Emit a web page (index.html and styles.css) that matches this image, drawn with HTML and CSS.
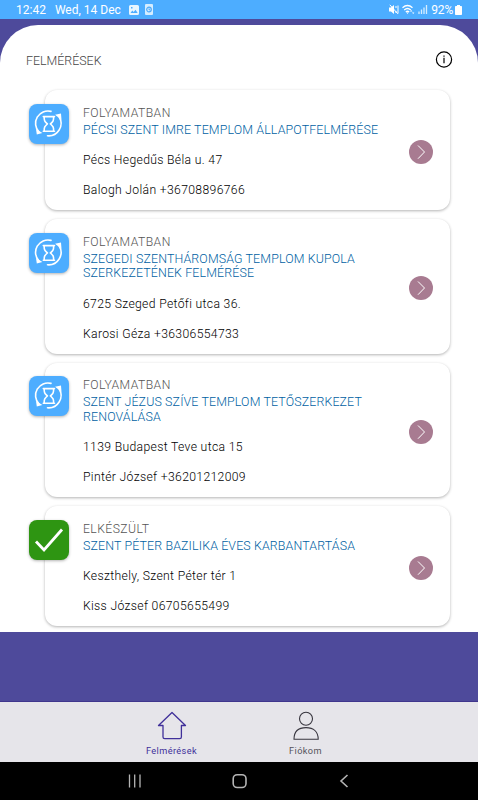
FILE: index.html
```html
<!DOCTYPE html>
<html lang="hu">
<head>
  <meta charset="UTF-8">
  <meta name="viewport" content="width=device-width, initial-scale=1.0">
  <title>Felmérések</title>
  <link rel="stylesheet" href="styles.css">
</head>
<body>
  <svg class="icon-defs" width="0" height="0">
    <symbol id="icon-progress" viewBox="0 0 40 40">
      <g fill="none" stroke="white" stroke-width="1.6" stroke-linecap="round" stroke-linejoin="round">
        <path d="M22 7.4A12.400 12.400 0 0 0 10 28"/>
        <path d="M30.200 13A12.400 12.400 0 0 1 18.500 31.800"/>
        <path d="M14.300 12.600h11.200M14.300 27.200h11.200M15.200 12.800c-.2 4.300.8 4.800 3.200 7.100-2.400 2.300-3.400 3-3.200 7.100M24.600 12.800c.2 4.300-.8 4.800-3.200 7.100 2.400 2.300 3.400 3 3.200 7.100"/>
      </g>
      <path d="M26 10.800l6-1.300.5 6.200zM7 25l.8 5.400 5.600-1.400z" fill="white"/>
    </symbol>
    <symbol id="icon-check" viewBox="0 0 40 40">
      <path d="M7 21.500l8 8.500L33 9.500" fill="none" stroke="white" stroke-width="2.8"/>
    </symbol>
    <symbol id="icon-arrow" viewBox="0 0 24 24">
      <path d="M9 5.500l6.500 6.500L9 18.700" fill="none" stroke="white" stroke-width="1"/>
    </symbol>
  </svg>

  <header class="status-bar">
    <span class="time">12:42</span>
    <span class="date">Wed, 14 Dec</span>
    <svg class="status-picture" width="10" height="10" viewBox="0 0 10 10">
      <path fill="#e8f6ff" fill-rule="evenodd" d="M1.500 0h7Q10 0 10 1.500v7Q10 10 8.500 10h-7Q0 10 0 8.500v-7Q0 0 1.500 0zM1.500 8h7.200L6.500 4.800 4.700 7 3.300 5.600zM2 2v1.500h1.500V2z"/>
    </svg>
    <svg class="status-app" width="8" height="11" viewBox="0 0 8 11">
      <rect width="8" height="11" rx="1" fill="#d5edff"/>
      <circle cx="4" cy="5.500" r="2.300" fill="none" stroke="#4da9f9" stroke-width="1.200"/>
      <path d="M4 4.300v1.500h1.200" fill="none" stroke="#4da9f9"/>
    </svg>
    <div class="status-right">
      <svg width="10" height="11" viewBox="0 0 10 11">
        <path d="M0 3.500h2L5 1v9L2 7.500H0z" fill="white"/>
        <path d="M.8.800l8 9M7 2v2M7 7v2M9 1.500v8" stroke="white" fill="none"/>
      </svg>
      <svg width="13" height="11" viewBox="0 0 13 11">
        <g fill="none" stroke="white" stroke-width="1.300">
          <path d="M.5 3.700q5-4.300 10 0M2.200 5.900q3.300-2.800 6.600 0M3.800 7.900q1.700-1.300 3.400 0"/>
        </g>
        <path d="M4.400 8.500h2.200l-1.100 1.500zM8 7.500l1.200-1.500 1.200 1.500zM10 8.500h2.400l-1.200 1.500z" fill="white"/>
      </svg>
      <svg width="10" height="11" viewBox="0 0 10 11">
        <path d="M1 10V7.500M3.500 10V5.500M6 10V3.500M8.500 10V1" stroke="#d5edff" stroke-width="1.300"/>
      </svg>
      <span class="battery-text">92%</span>
      <svg width="7" height="10" viewBox="0 0 7 10">
        <path d="M2 0h3v1h1.200q.8 0 .8.800v7.400q0 .8-.8.800H.800q-.8 0-.8-.8V1.800Q0 1 .800 1H2z" fill="white"/>
      </svg>
    </div>
  </header>

  <main class="sheet">
    <div class="sheet-header">
      <h1>FELMÉRÉSEK</h1>
      <svg width="18" height="18" viewBox="0 0 18 18">
        <circle cx="9" cy="8.500" r="7.600" fill="none" stroke="black" stroke-width="1.200"/>
        <path d="M9 6.800v5.500M9 4.500v1.300" stroke="black" stroke-width="1.200"/>
      </svg>
    </div>

    <div class="survey-list">
      <article class="card">
        <div class="badge"><svg><use href="#icon-progress"/></svg></div>
        <div class="card-text">
          <p class="state">FOLYAMATBAN</p>
          <h2>PÉCSI SZENT IMRE TEMPLOM ÁLLAPOTFELMÉRÉSE</h2>
          <p class="address">Pécs Hegedűs Béla u. 47</p>
          <p class="contact">Balogh Jolán +36708896766</p>
        </div>
        <div class="arrow"><svg><use href="#icon-arrow"/></svg></div>
      </article>

      <article class="card">
        <div class="badge"><svg><use href="#icon-progress"/></svg></div>
        <div class="card-text">
          <p class="state">FOLYAMATBAN</p>
          <h2>SZEGEDI SZENTHÁROMSÁG TEMPLOM KUPOLA<br>SZERKEZETÉNEK FELMÉRÉSE</h2>
          <p class="address">6725 Szeged Petőfi utca 36.</p>
          <p class="contact">Karosi Géza +36306554733</p>
        </div>
        <div class="arrow"><svg><use href="#icon-arrow"/></svg></div>
      </article>

      <article class="card">
        <div class="badge"><svg><use href="#icon-progress"/></svg></div>
        <div class="card-text">
          <p class="state">FOLYAMATBAN</p>
          <h2>SZENT JÉZUS SZÍVE TEMPLOM TETŐSZERKEZET<br>RENOVÁLÁSA</h2>
          <p class="address">1139 Budapest Teve utca 15</p>
          <p class="contact">Pintér József +36201212009</p>
        </div>
        <div class="arrow"><svg><use href="#icon-arrow"/></svg></div>
      </article>

      <article class="card">
        <div class="badge done"><svg><use href="#icon-check"/></svg></div>
        <div class="card-text">
          <p class="state">ELKÉSZÜLT</p>
          <h2>SZENT PÉTER BAZILIKA ÉVES KARBANTARTÁSA</h2>
          <p class="address">Keszthely, Szent Péter tér 1</p>
          <p class="contact">Kiss József 06705655499</p>
        </div>
        <div class="arrow"><svg><use href="#icon-arrow"/></svg></div>
      </article>
    </div>
  </main>

  <nav class="tab-bar">
    <a class="tab active">
      <svg width="30" height="30" viewBox="0 0 30 30">
        <path d="M15 1.500L1.500 14.500H6V26q0 1.700 1.700 1.700h15Q24.400 27.700 24.400 26V14.500h4.100z" fill="none" stroke="currentColor" stroke-width="1.300" stroke-linejoin="round"/>
      </svg>
      <span>Felmérések</span>
    </a>
    <a class="tab">
      <svg width="30" height="30" viewBox="0 0 30 30">
        <g fill="none" stroke="#38363f" stroke-width="1.100">
          <circle cx="15" cy="7.700" r="6.500"/>
          <path d="M3 28.300C3 20.800 7.500 16.600 15 16.600S27.200 20.800 27.200 28.300z"/>
        </g>
      </svg>
      <span>Fiókom</span>
    </a>
  </nav>

  <footer class="system-nav">
    <svg width="14" height="14" viewBox="0 0 14 14">
      <path d="M1.500.5v13M6.700.5v13M12 .5v13" stroke="#b5b5b5" stroke-width="1.300"/>
    </svg>
    <svg width="16" height="16" viewBox="0 0 16 16">
      <rect x="1.200" y="1.700" width="12.800" height="12.800" rx="4" fill="none" stroke="#b5b5b5" stroke-width="1.600"/>
    </svg>
    <svg width="14" height="14" viewBox="0 0 14 14">
      <path d="M10.500 1L4 7l6.500 6" fill="none" stroke="#b5b5b5" stroke-width="1.600"/>
    </svg>
  </footer>
</body>
</html>
```
FILE: styles.css
```css
* {
  box-sizing: border-box;
}

body {
  margin: 0;
  height: 800px;
  display: flex;
  flex-direction: column;
  background: #4e4a9b;
  font-family: Roboto, "Liberation Sans", sans-serif;
  overflow: hidden;
}

h1, h2, p {
  margin: 0;
  font-weight: 400;
}

svg {
  display: block;
}

.icon-defs {
  position: absolute;
}

/* Phone status bar */
.status-bar {
  height: 19px;
  flex: none;
  display: flex;
  align-items: center;
  padding: 0 16px 0 16px;
  background: #4dadff;
  color: white;
  font-size: 12px;
}

.date {
  margin-left: 9px;
}

.status-picture {
  margin-left: 8px;
}

.status-app {
  margin-left: 6px;
}

.status-right {
  display: flex;
  align-items: center;
  gap: 3px;
  margin-left: auto;
}

.battery-text {
  margin: 0 -1px 0 0;
  letter-spacing: -0.200px;
}

/* White content sheet */
.sheet {
  height: 607px;
  margin-top: 6px;
  flex: none;
  background: white;
  border-radius: 38px 38px 0 0;
}

.sheet-header {
  height: 65.300px;
  display: flex;
  justify-content: space-between;
  align-items: flex-start;
  padding: 26px 25px 0 26px;
}

.sheet-header h1 {
  font-size: 12.400px;
  font-weight: 300;
  line-height: 20px;
  color: #444;
}

.survey-list {
  display: flex;
  flex-direction: column;
  gap: 9.300px;
  padding: 0 28px 0 28.500px;
}

.card {
  display: flex;
  align-items: center;
  margin-left: 16px;
  padding: 13.400px 17px 12px 0;
  background: white;
  border-radius: 12px;
  box-shadow: 0 1px 3px rgba(0, 0, 0, 0.3);
}

.badge {
  width: 40px;
  height: 40px;
  flex: none;
  align-self: flex-start;
  margin-left: -16px;
  border-radius: 8px;
  background: #4dadff;
  box-shadow: 0 1px 3px rgba(0, 0, 0, 0.3);
}

.badge.done {
  background: #2e9512;
}

.badge svg {
  width: 40px;
  height: 40px;
}

.card-text {
  flex: 1;
  margin-left: 14.500px;
  padding-top: 1px;
  font-size: 12.200px;
  letter-spacing: 0.330px;
  color: black;
}

.state {
  line-height: 16px;
  font-weight: 300;
  letter-spacing: 0.430px;
  color: #555;
}

.card h2 {
  margin-top: 2px;
  font-size: 12.400px;
  font-weight: 300;
  line-height: 14.400px;
  letter-spacing: 0.140px;
  color: #005fa3;
  white-space: nowrap;
}

.address, .contact {
  line-height: 16px;
  font-weight: 300;
}

.address {
  margin-top: 15px;
}

.contact {
  margin-top: 14px;
}

.arrow {
  width: 24px;
  height: 24px;
  flex: none;
  margin-top: 2px;
  border-radius: 50%;
  background: #a87b91;
}

.arrow svg {
  width: 24px;
  height: 24px;
}

/* App tabs */
.tab-bar {
  height: 61px;
  margin-top: auto;
  flex: none;
  display: flex;
  justify-content: center;
  padding-right: 1px;
  border-top: 1px solid #40368d;
  background: #e6e5ea;
}

.tab {
  width: 134px;
  display: flex;
  flex-direction: column;
  align-items: center;
  padding-top: 9px;
  font-size: 9.200px;
  color: #55535b;
}

.tab.active {
  color: #40309a;
}

.tab span {
  margin-top: 4px;
  line-height: 12px;
  letter-spacing: 0.400px;
}

/* Phone navigation buttons */
.system-nav {
  height: 38px;
  flex: none;
  display: flex;
  justify-content: space-between;
  align-items: center;
  padding: 0 127px 0 128px;
  background: black;
}
```
